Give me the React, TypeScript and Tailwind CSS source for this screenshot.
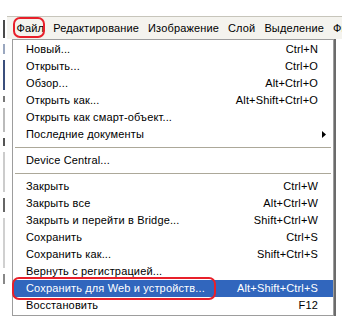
import { Fragment } from "react";

type Item = { label: string; shortcut?: string; arrow?: boolean; active?: boolean };

// null marks a separator
const items: (Item | null)[] = [
  { label: "Новый...", shortcut: "Ctrl+N" },
  { label: "Открыть...", shortcut: "Ctrl+O" },
  { label: "Обзор...", shortcut: "Alt+Ctrl+O" },
  { label: "Открыть как...", shortcut: "Alt+Shift+Ctrl+O" },
  { label: "Открыть как смарт-объект..." },
  { label: "Последние документы", arrow: true },
  null,
  { label: "Device Central..." },
  null,
  { label: "Закрыть", shortcut: "Ctrl+W" },
  { label: "Закрыть все", shortcut: "Alt+Ctrl+W" },
  { label: "Закрыть и перейти в Bridge...", shortcut: "Shift+Ctrl+W" },
  { label: "Сохранить", shortcut: "Ctrl+S" },
  { label: "Сохранить как...", shortcut: "Shift+Ctrl+S" },
  { label: "Вернуть с регистрацией..." },
  { label: "Сохранить для Web и устройств...", shortcut: "Alt+Shift+Ctrl+S", active: true },
  { label: "Восстановить", shortcut: "F12" },
];

const menus = ["Файл", "Редактирование", "Изображение", "Слой", "Выделение", "Фильтр"];

const MenuRow = ({ item }: { item: Item }) => (
  <div
    className={`flex items-center h-[17px] pl-[13px] pr-[15px] whitespace-nowrap ${
      item.active ? "bg-[#3166bd] text-white" : "text-black"
    }`}
  >
    <span className="flex-1 overflow-hidden">{item.label}</span>
    {item.shortcut && <span>{item.shortcut}</span>}
    {item.arrow && (
      <svg width="4" height="7" viewBox="0 0 4 7" className="mr-[-8px]">
        <path d="M0 0 L4 3.5 L0 7 Z" fill="#000" />
      </svg>
    )}
  </div>
);

const App = () => {
  return (
    <div
      className="relative w-[342px] h-[329px] overflow-hidden bg-white text-[11px] leading-none tracking-[0.15px]"
      style={{ fontFamily: '"Liberation Sans", Arial, sans-serif' }}
    >
      <div className="h-[16px]" />
      <div className="flex">
        {/* edge of the tools panel behind the menu */}
        <div className="w-[7px] shrink-0 flex flex-col items-center pt-[4px] gap-[6px]">
          <div className="w-[2px] h-[18px] bg-[#4a4a4a]" />
          <div className="w-[2px] h-[10px] bg-[#9aa7bf]" />
          <div className="w-[2px] h-[30px] bg-[#3b4f7c]" />
          <div className="w-[2px] h-[6px] bg-[#777]" />
          <div className="w-[2px] h-[24px] bg-[#bbb]" />
          <div className="w-[2px] h-[8px] bg-[#555]" />
          <div className="w-[2px] h-[40px] bg-[#ccc]" />
          <div className="w-[2px] h-[14px] bg-[#666]" />
          <div className="w-[2px] h-[50px] bg-[#d0d0d0]" />
          <div className="w-[2px] h-[10px] bg-[#888]" />
        </div>
        <div className="flex-1 min-w-0 overflow-hidden flex flex-col">
          <div className="flex items-center h-[23px] pl-[5px] bg-[#f4f3ee] border-t border-[#c7c5bb] whitespace-nowrap text-black">
            {menus.map((m) => (
              <span key={m} className="px-[4.5px]">
                {m}
              </span>
            ))}
          </div>
          <div className="ml-[5px] w-[322px] bg-white border border-[#9d9d9d] shadow-[2px_0_0_#6b6b6b] py-[1px]">
            {items.map((item, i) => (
              <Fragment key={i}>
                {item ? (
                  <MenuRow item={item} />
                ) : (
                  <div className="h-[9px] flex items-center px-[2px]">
                    <div className="w-full h-px bg-[#aca899]" />
                  </div>
                )}
              </Fragment>
            ))}
          </div>
        </div>
      </div>
      {/* red annotation marks */}
      <div className="absolute left-[13px] top-[17px] w-[32px] h-[21px] border-2 border-[#e8202a] rounded-[7px]" />
      <div className="absolute left-[12px] top-[277px] w-[204px] h-[23px] border-2 border-[#e8202a] rounded-[7px]" />
    </div>
  );
};

export default App;
